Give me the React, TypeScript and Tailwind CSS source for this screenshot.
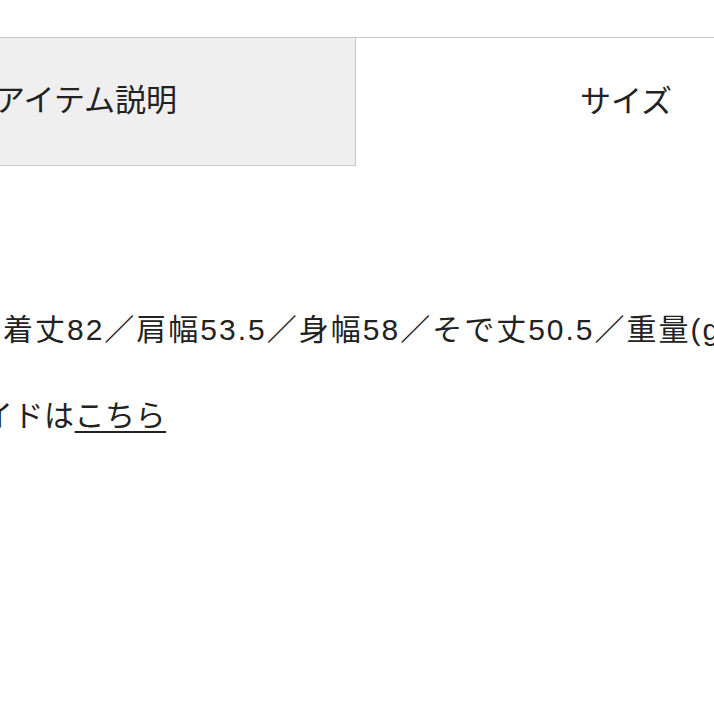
const font = { fontFamily: '"Liberation Sans", "Noto Sans CJK JP", sans-serif' };

export default function App() {
  return (
    <div className="w-[714px] h-[714px] overflow-hidden bg-white text-[#222]" style={font}>
      <div className="ml-[-184px] w-[1080px] pt-[37px]">
        {/* タブ */}
        <div className="flex border-t border-[#c8c8c8]">
          <div className="w-[540px] h-[128px] flex items-center justify-center bg-[#efefef] border-r border-b border-[#c8c8c8] text-[31px]">
            アイテム説明
          </div>
          <div className="w-[540px] h-[128px] flex items-center justify-center bg-white text-[31px]">
            サイズ
          </div>
        </div>

        {/* サイズ詳細 */}
        <div className="pt-[142px] text-[30px] leading-[43px] whitespace-nowrap">
          <p className="pl-[187px] tracking-[2px]">
            着丈82／肩幅53.5／身幅58／そで丈50.5／重量(g)
          </p>
          <p className="mt-[43px] pl-[46px] tracking-[0.5px]">
            サイズガイドは
            <a className="underline decoration-[2px] underline-offset-[5px]">こちら</a>
          </p>
        </div>
      </div>
    </div>
  );
}
